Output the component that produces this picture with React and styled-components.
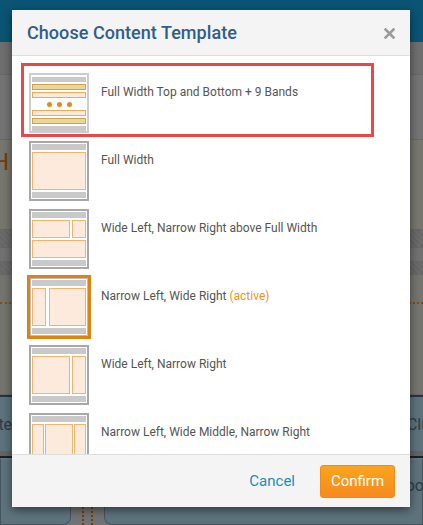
import React from 'react'
import styled, { createGlobalStyle, css } from 'styled-components'

const GlobalStyle = createGlobalStyle`
  html, body { margin: 0; padding: 0; }
  body { font-family: Roboto, "Liberation Sans", Arial, sans-serif; }
  * { box-sizing: border-box; }
`;

const templates = [
  { id: 'bands', label: 'Full Width Top and Bottom + 9 Bands', selected: true },
  { id: 'full', label: 'Full Width' },
  { id: 'wlnr-full', label: 'Wide Left, Narrow Right above Full Width' },
  { id: 'nlwr', label: 'Narrow Left, Wide Right', active: true },
  { id: 'wlnr', label: 'Wide Left, Narrow Right' },
  { id: 'nlwmnr', label: 'Narrow Left, Wide Middle, Narrow Right' },
];

export default function App() {
  return (
    <>
      <GlobalStyle />
      <Screen>
        <Page>
          <TopNav />
          <Band $h={33} $bg="#dedede" />
          <Band $h={65} $bg="#e8e8e8" />
          <Band $h={90} $bg="#eeeede">
            <BigLetter>H</BigLetter>
          </Band>
          <Hatch $h={18} />
          <Band $h={14} $bg="#e4e4e4" />
          <Hatch $h={13} />
          <Band $h={120} $bg="#eaeae0">
            <Dotted />
          </Band>
          <Tiles>
            <TileText>Content</TileText>
            <TileText $right>Club</TileText>
          </Tiles>
          <Gap />
          <Cards>
            <Card />
            <Rail><RailLine /><RailLine /></Rail>
            <Card $wide><TileText $right>Room</TileText></Card>
          </Cards>
        </Page>
        <Backdrop />
        <Modal>
          <Header>
            <Title>Choose Content Template</Title>
            <Close aria-label="Close">
              <svg width="11" height="11" viewBox="0 0 11 11">
                <path d="M1.5 1.5 L9.5 9.5 M9.5 1.5 L1.5 9.5" stroke="#9b9b9b" strokeWidth="2.6" strokeLinecap="square" />
              </svg>
            </Close>
          </Header>
          <Body>
            {templates.map(t => (
              <Item key={t.id} $selected={t.selected}>
                <Thumb $active={t.active} $light={t.selected}>
                  <Preview id={t.id} />
                </Thumb>
                <Label>
                  {t.label}
                  {t.active && <Active> (active)</Active>}
                </Label>
              </Item>
            ))}
          </Body>
          <Footer>
            <Cancel>Cancel</Cancel>
            <Confirm>Confirm</Confirm>
          </Footer>
        </Modal>
      </Screen>
    </>
  )
}

function Preview({ id }) {
  if (id === 'bands') {
    return (
      <Stack $tight>
        <Bar $h={5} />
        <Strip $dark />
        <Strip />
        <Dots><Dot /><Dot /><Dot /></Dots>
        <Strip />
        <Strip $dark />
        <Bar $h={5} />
      </Stack>
    )
  }
  const middle = {
    full: <Box $grow={1} />,
    'wlnr-full': (
      <>
        <Row $grow={1.1}><Box $grow={1} /><Box $w={14} /></Row>
        <Box $grow={1} />
      </>
    ),
    nlwr: <Row $grow={1} $gap={3}><Box $w={14} /><Box $grow={1} /></Row>,
    wlnr: <Row $grow={1}><Box $grow={1} /><Box $w={14} /></Row>,
    nlwmnr: <Row $grow={1} $gap={1}><Box $w={12} /><Box $grow={1} /><Box $w={12} /></Row>,
  }[id]
  return (
    <Stack>
      <Bar $h={6} />
      {middle}
      <Bar $h={6} />
    </Stack>
  )
}

const Screen = styled.div`
  position: relative;
  width: 423px;
  height: 525px;
  overflow: hidden;
`;

const Page = styled.div`
  display: flex;
  flex-direction: column;
  background: #e0e0e0;
  height: 100%;
`;

const TopNav = styled.div`
  height: 42px;
  flex: none;
  background: #16a8e8;
`;

const Band = styled.div`
  position: relative;
  flex: none;
  height: ${p => p.$h}px;
  background: ${p => p.$bg};
  border-bottom: 1px solid #d0d0d0;
  overflow: hidden;
`;

const Hatch = styled(Band)`
  background: repeating-linear-gradient(45deg, #d8d8d8 0 2px, #cfcfcf 2px 4px);
`;

const BigLetter = styled.div`
  margin: 8px 0 0 -8px;
  font-size: 24px;
  line-height: 28px;
  color: #e87a18;
`;

const Dotted = styled.div`
  margin-top: 27px;
  border-top: 2px dotted #ff9a2e;
`;

const Tiles = styled.div`
  flex: none;
  height: 56px;
  display: flex;
  justify-content: space-between;
  align-items: center;
  background: #bde6f8;
  border-top: 2px solid #4a6a8a;
`;

const TileText = styled.span`
  font-size: 16px;
  color: #5b7a94;
  margin: ${p => (p.$right ? '0 -16px 0 0' : '0 0 0 -30px')};
`;

const Gap = styled.div`
  flex: none;
  height: 7px;
  background: #c8c8c8;
  border-bottom: 2px solid #2b4660;
`;

const Cards = styled.div`
  flex: 1;
  display: flex;
  background: #e6e6e6;
`;

const Card = styled.div`
  flex: ${p => (p.$wide ? 1 : 'none')};
  width: ${p => (p.$wide ? 'auto' : '71px')};
  display: flex;
  justify-content: flex-end;
  align-items: center;
  padding-bottom: 14px;
  background: #bde6f8;
  border: 1px solid #8aaac0;
  border-top: 2px solid #d6ecf7;
  border-radius: ${p => (p.$wide ? '0 0 0 8px' : '0 0 8px 0')};
`;

const Rail = styled.div`
  width: 33px;
  display: flex;
  justify-content: center;
  gap: 7px;
`;

const RailLine = styled.div`
  border-left: 2px dotted #e87a10;
`;

const Backdrop = styled.div`
  position: absolute;
  inset: 0;
  background: rgba(0, 0, 0, 0.5);
`;

const Modal = styled.div`
  position: absolute;
  top: 10px;
  left: 12px;
  width: 398px;
  height: 497px;
  display: flex;
  flex-direction: column;
  background: #fff;
  box-shadow: 0 3px 9px rgba(0, 0, 0, 0.5);
`;

const Header = styled.div`
  flex: none;
  height: 46px;
  display: flex;
  align-items: center;
  justify-content: space-between;
  padding: 0 15px 0 15px;
  background: #f4f4f4;
  border-bottom: 1px solid #dedede;
`;

const Title = styled.h4`
  margin: 0;
  font-size: 18px;
  font-weight: 500;
  color: #2e5e8c;
  letter-spacing: 0.05px;
`;

const Close = styled.button`
  border: 0;
  padding: 0;
  background: none;
  display: flex;
  margin-top: 1px;
`;

const Body = styled.div`
  flex: 1;
  overflow: hidden;
  padding: 13px 36px 0 12px;
`;

const Item = styled.div`
  position: relative;
  height: 68px;
  display: flex;
  align-items: flex-start;
  padding: 4px 0 4px 5px;

  ${p => p.$selected && css`
    &::before {
      content: '';
      position: absolute;
      top: -6px;
      left: -3px;
      right: 0;
      bottom: 0;
      border: 3px solid #e84848;
    }
  `}
`;

const Thumb = styled.div`
  flex: none;
  width: 60px;
  height: 60px;
  padding: 1px;
  background: #fff;
  border: 2px solid ${p => (p.$light ? '#cdcdcd' : '#a8a8a8')};

  ${p => p.$active && css`
    width: 64px;
    height: 64px;
    margin: -2px;
    padding: 2px;
    border: 3px solid #e0820e;
    box-shadow: inset 0 0 0 1px #bdbdbd;
  `}
`;

const Stack = styled.div`
  height: 100%;
  display: flex;
  flex-direction: column;
  justify-content: space-between;
  gap: 2px;
  padding: ${p => (p.$tight ? '1px 0' : '0')};
`;

const Bar = styled.div`
  flex: none;
  height: ${p => p.$h}px;
  background: #c9c9c9;
`;

const Strip = styled.div`
  flex: none;
  height: 6px;
  background: ${p => (p.$dark ? '#ead59c' : '#fcebdb')};
  border: 1px solid ${p => (p.$dark ? '#cfa24e' : '#efa858')};
`;

const Dots = styled.div`
  flex: none;
  height: 8px;
  display: flex;
  justify-content: center;
  align-items: center;
  gap: 5px;
`;

const Dot = styled.span`
  width: 5px;
  height: 5px;
  border-radius: 50%;
  background: #e5891d;
`;

const Row = styled.div`
  flex: ${p => p.$grow} 1 0;
  display: flex;
  gap: ${p => p.$gap ?? 2}px;
`;

const Box = styled.div`
  flex: ${p => (p.$w ? `0 0 ${p.$w}px` : `${p.$grow} 1 0`)};
  background: #fcebdc;
  border: 1px solid #f2b46c;
`;

const Label = styled.div`
  margin-left: 12px;
  padding-top: 11px;
  font-size: 12px;
  line-height: 17px;
  color: #555;
`;

const Active = styled.span`
  color: #ee9225;
`;

const Footer = styled.div`
  flex: none;
  height: 53px;
  display: flex;
  align-items: center;
  justify-content: flex-end;
  gap: 25px;
  padding: 0 15px 0 0;
  background: #f4f4f4;
  border-top: 1px solid #dedede;
`;

const Cancel = styled.a`
  font-size: 15px;
  color: #1b8bc2;
  cursor: pointer;
`;

const Confirm = styled.button`
  width: 75px;
  height: 33px;
  border: 1px solid #f08a1a;
  border-radius: 3px;
  background: linear-gradient(#faa41d, #f68a1f);
  color: #fff;
  font-family: inherit;
  font-size: 15px;
  padding: 0;
`;
